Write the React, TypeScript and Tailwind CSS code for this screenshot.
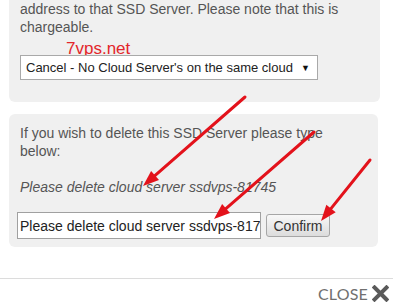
import React from "react";

type Arrow = { x1: number; y1: number; x2: number; y2: number };

const arrows: Arrow[] = [
  { x1: 245, y1: 97, x2: 143, y2: 186 },
  { x1: 314, y1: 132, x2: 214, y2: 219 },
  { x1: 370, y1: 160, x2: 321, y2: 221 },
];

// head triangle for an arrow ending at (x2, y2)
const headPoints = ({ x1, y1, x2, y2 }: Arrow) => {
  const len = Math.hypot(x2 - x1, y2 - y1);
  const ux = (x2 - x1) / len;
  const uy = (y2 - y1) / len;
  const bx = x2 - ux * 16;
  const by = y2 - uy * 16;
  const w = 6;
  return `${x2},${y2} ${bx - uy * w},${by + ux * w} ${bx + uy * w},${by - ux * w}`;
};

const RedArrows = () => (
  <svg
    className="absolute inset-0 pointer-events-none z-20"
    width={393}
    height={308}
    viewBox="0 0 393 308"
  >
    {arrows.map((a, i) => {
      const len = Math.hypot(a.x2 - a.x1, a.y2 - a.y1);
      const ex = a.x2 - ((a.x2 - a.x1) / len) * 12;
      const ey = a.y2 - ((a.y2 - a.y1) / len) * 12;
      return (
        <g key={i}>
          <line
            x1={a.x1}
            y1={a.y1}
            x2={ex}
            y2={ey}
            stroke="#e3121b"
            strokeWidth={3}
            strokeLinecap="round"
          />
          <polygon points={headPoints(a)} fill="#e3121b" />
        </g>
      );
    })}
  </svg>
);

const App = () => {
  return (
    <div
      className="relative w-[393px] h-[308px] overflow-hidden bg-white text-[#555] text-[14px] leading-[18px]"
      style={{ fontFamily: '"Liberation Sans", Arial, sans-serif' }}
    >
      {/* top panel, cut off by the screenshot */}
      <div className="relative ml-[9px] w-[371px] bg-[#f0f0f0] rounded-b-[6px] pl-[11px] pr-[20px] pb-[22px]">
        <p>address to that SSD Server. Please note that this is chargeable.</p>
        <div className="relative h-[19px]">
          <span className="absolute left-[46px] top-[4px] text-[17px] leading-[17px] text-[#e3262b]">
            7vps.net
          </span>
        </div>
        <div className="relative z-10 flex items-center justify-between w-[298px] h-[25px] bg-white border border-[#a9a9a9] pl-[5px] pr-[7px] text-[13px] text-[#222] whitespace-nowrap">
          <span>Cancel - No Cloud Server's on the same cloud</span>
          <span className="text-[9px] text-[#111]">▼</span>
        </div>
      </div>

      {/* delete panel */}
      <div className="mt-[12px] ml-[9px] w-[369px] bg-[#f0f0f0] rounded-[6px] pt-[10px] pl-[11px] pr-[28px] pb-[8px]">
        <p>If you wish to delete this SSD Server please type below:</p>
        <p className="mt-[18px] italic">Please delete cloud server ssdvps-81745</p>
        <div className="mt-[16px] -ml-[3px] flex items-center gap-[5px] whitespace-nowrap">
          <input
            readOnly
            value="Please delete cloud server ssdvps-81745"
            className="w-[244px] h-[27px] shrink-0 bg-white border border-[#a0a0a0] pl-[2px] text-[14px] text-[#222] outline-none"
            style={{ fontFamily: '"Liberation Sans", Arial, sans-serif' }}
          />
          <button className="h-[23px] w-[64px] shrink-0 border border-[#a6a6a6] rounded-[3px] bg-gradient-to-b from-[#f8f8f8] to-[#dcdcdc] text-[14px] text-[#333] leading-[20px]">
            Confirm
          </button>
        </div>
      </div>

      <div className="mt-[31px] border-t border-[#dcdcdc]" />
      <div className="flex items-center justify-end h-[29px] pr-[4px] gap-[4px]">
        <span
          className="text-[16px] leading-[16px] text-[#707070] tracking-[0.2px]"
          style={{ fontFamily: "Lato, sans-serif" }}
        >
          CLOSE
        </span>
        <svg width="17" height="17" viewBox="0 0 17 17">
          <path
            d="M2.5 2.5 L14.5 14.5 M14.5 2.5 L2.5 14.5"
            stroke="#5a5a5a"
            strokeWidth="4"
            strokeLinecap="square"
          />
        </svg>
      </div>

      <RedArrows />
    </div>
  );
};

export default App;
